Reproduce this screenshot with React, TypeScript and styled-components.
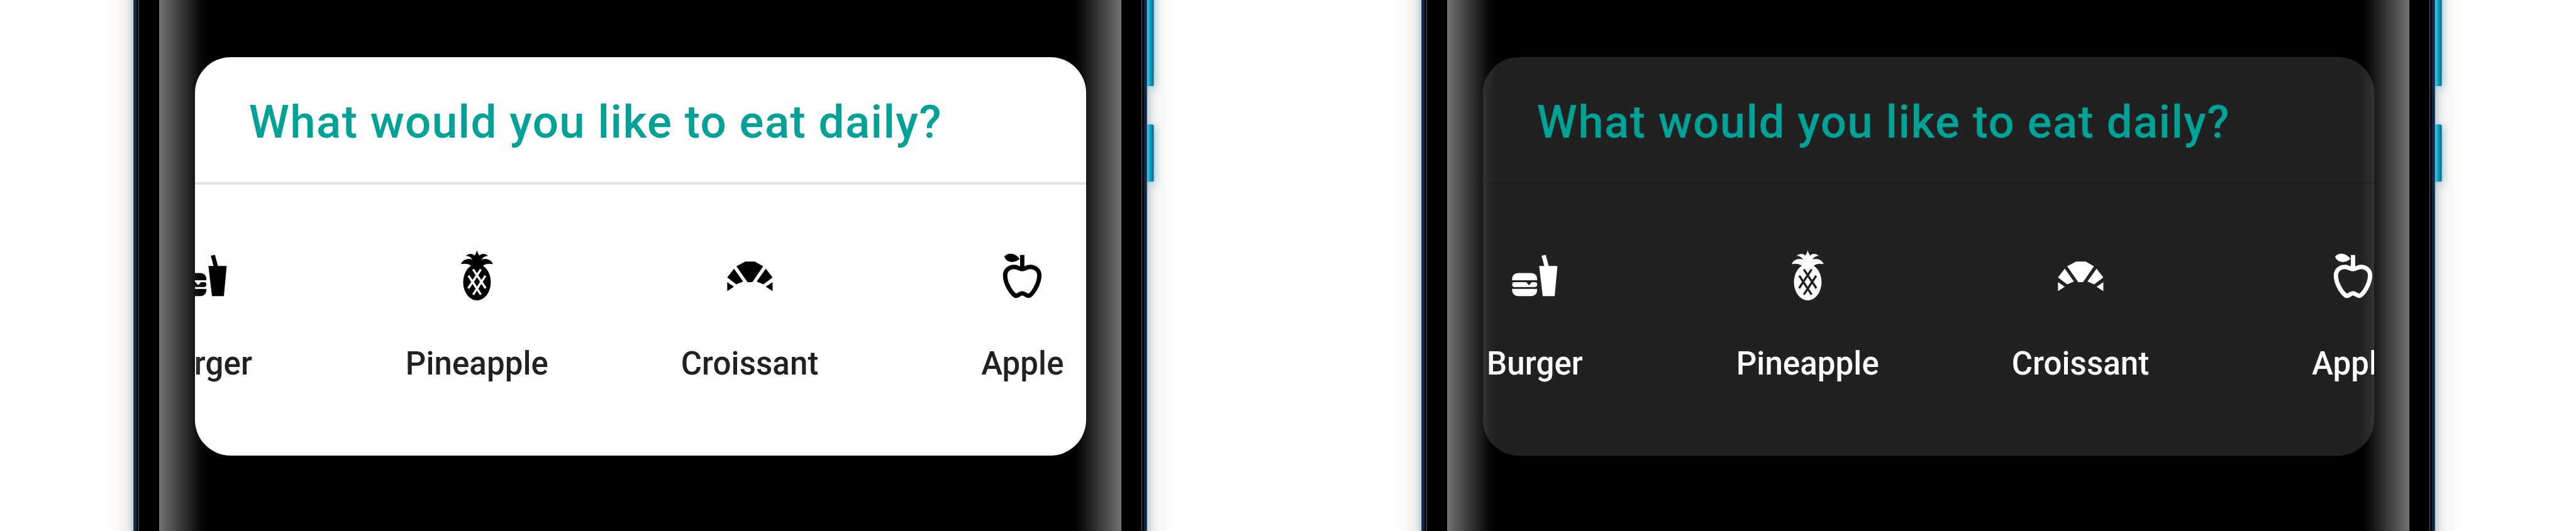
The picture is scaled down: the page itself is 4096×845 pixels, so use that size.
import React from "react";
import styled, { createGlobalStyle, ThemeProvider } from "styled-components";

const SCALE = 4096 / 4320;
const u = (n: number) => `${+(n * SCALE).toFixed(3)}px`;

interface Scheme {
  surface: string;
  divider: string;
  label: string;
  icon: string;
  title: string;
}

const light: Scheme = {
  surface: "#ffffff",
  divider: "#e0e0e0",
  label: "#212121",
  icon: "#000000",
  title: "#00a196",
};

const dark: Scheme = {
  surface: "#212121",
  divider: "#1d1d1d",
  label: "#ffffff",
  icon: "#ffffff",
  title: "#00a196",
};

const GlobalStyle = createGlobalStyle`
  html, body { margin: 0; padding: 0; background: #fff; }
  body { overflow: hidden; font-family: Roboto, "Liberation Sans", sans-serif; }
  * { box-sizing: border-box; }
`;

const Page = styled.main`
  display: flex;
  width: 4096px;
  height: 845px;
  overflow: hidden;
  background: #fff;
`;

const Stage = styled.section`
  display: flex;
  flex: 0 0 ${u(2160)};
  height: calc(100% + ${u(200)});
  margin-top: ${u(-100)};
  padding-left: ${u(224)};
`;

const Body = styled.div`
  display: flex;
  flex: 0 0 ${u(1699.7)};
  min-width: 0;
  height: 100%;
  background: #000;
  box-shadow: 0 0 ${u(13)} rgba(0, 100, 130, 0.32), 0 0 ${u(44)} rgba(0, 0, 0, 0.2);
`;

const Rail = styled.div<{ $flip?: boolean }>`
  flex: 0 0 ${u(43)};
  background: linear-gradient(
    ${(p) => (p.$flip ? "270deg" : "90deg")},
    #3c4a52 0 ${u(1.2)},
    #0b2748 ${u(1.6)} ${u(5.4)},
    #000 ${u(6)} ${u(8)},
    #5c5f5f ${u(8)} ${u(9)},
    #000 ${u(9.2)}
  );
`;

const Screen = styled.div`
  position: relative;
  flex: 1 1 0;
  min-width: 0;
  padding: ${u(196)} ${u(59.7)} 0 ${u(59.5)};
  background: #000;
`;

const EdgeGlare = styled.div<{ $side: "left" | "right" }>`
  position: absolute;
  top: 0;
  bottom: 0;
  ${(p) => p.$side}: 0;
  width: ${u(80)};
  pointer-events: none;
  background: linear-gradient(
    to ${(p) => (p.$side === "left" ? "right" : "left")},
    rgba(255, 255, 255, 0.45) 0%,
    rgba(255, 255, 255, 0.33) 25%,
    rgba(255, 255, 255, 0.21) 50%,
    rgba(255, 255, 255, 0.09) 74%,
    rgba(255, 255, 255, 0.03) 87%,
    rgba(255, 255, 255, 0) 100%
  );
`;

const SideKeys = styled.div`
  display: flex;
  flex-direction: column;
  gap: ${u(65)};
`;

const SideKey = styled.div<{ $height: number }>`
  width: ${u(11.3)};
  height: ${(p) => u(p.$height)};
  border-radius: 0 ${u(2.5)} ${u(2.5)} 0;
  background: linear-gradient(90deg, #6cc5e6 0%, #35b0d8 22%, #0a9dc6 48%, #00889c 72%, #00736f 90%, #5a93a8 96%);
  box-shadow: ${u(2)} ${u(3)} ${u(14)} rgba(0, 120, 150, 0.34);
`;

const Card = styled.article`
  height: ${u(668.5)};
  border-radius: ${u(60)};
  overflow: hidden;
  background: ${(p) => (p.theme as Scheme).surface};
`;

const CardHeader = styled.header`
  display: flex;
  align-items: center;
  height: ${u(213.7)};
  padding: ${u(9)} 0 0 ${u(91)};
  border-bottom: 4px solid ${(p) => (p.theme as Scheme).divider};
`;

const Title = styled.h2`
  margin: 0;
  font-size: ${u(76.8)};
  font-weight: 500;
  line-height: ${u(100)};
  letter-spacing: ${u(1.42)};
  white-space: nowrap;
  color: ${(p) => (p.theme as Scheme).title};
`;

const Carousel = styled.div<{ $offset: number }>`
  display: flex;
  width: max-content;
  margin-left: ${(p) => u(p.$offset)};
  padding-top: ${u(100.3)};
`;

const Item = styled.div`
  display: flex;
  flex-direction: column;
  align-items: center;
  width: ${u(457.5)};
`;

const Glyph = styled.svg`
  display: block;
  width: ${u(100)};
  height: ${u(100)};
  fill: ${(p) => (p.theme as Scheme).icon};

  .outline {
    fill: none;
    stroke: ${(p) => (p.theme as Scheme).icon};
  }
  .cutout {
    fill: none;
    stroke: ${(p) => (p.theme as Scheme).surface};
  }
`;

const Label = styled.span`
  margin-top: ${u(70.4)};
  font-size: ${u(53.76)};
  font-weight: 500;
  line-height: ${u(62)};
  letter-spacing: ${u(0.1)};
  white-space: nowrap;
  color: ${(p) => (p.theme as Scheme).label};
`;

const BurgerIcon = () => (
  <Glyph viewBox="12 0 300 300">
    <path d="M48 180v-4c0-20 12-32 32-32h62c20 0 32 12 32 32v4z" />
    <path d="M58 190h61l14 16 14-16h17q10 0 10 12t-10 12H58q-10 0-10-12t10-12z" />
    <path d="M48 224h126v4c0 20-12 32-32 32H80c-20 0-32-12-32-32z" />
    <path d="M184 108h26L196 57l21-5 15 56h44l-14 152h-60z" />
  </Glyph>
);

const PineappleIcon = () => (
  <Glyph viewBox="4.5 0 300 300">
    <ellipse cx="154.5" cy="190" rx="69.5" ry="91.5" />
    <path d="M154.500 29C158 43 163 50 167 56C177 44 198 45 210 58C193 59 185 66 178 76C200 68 226 76 235 99C215 95 196 98 182 108H127C113 98 94 95 74 99C83 76 109 68 131 76C124 66 116 59 99 58C111 45 132 44 142 56C146 50 151 43 154.500 29z" />
    <path
      className="cutout"
      strokeWidth="11"
      strokeLinecap="square"
      strokeLinejoin="round"
      d="M138 130L195 216M171 130L114 216M115 162L171 248M194 162L138 248"
    />
  </Glyph>
);

const CroissantIcon = () => (
  <Glyph viewBox="27 0 300 300">
    <path d="M154 86h48l42 24-55 80h-24l-56-80z" />
    <path d="M97 122l46 65-34 14-46-35z" />
    <path d="M257 122l-46 65 34 14 46-35z" />
    <path d="M63 190l34 23-34 22z" />
    <path d="M291 190l-34 23 34 22z" />
  </Glyph>
);

const AppleIcon = () => (
  <Glyph viewBox="109 90 300 300">
    <path d="M248 143h22v76h-22z" />
    <path d="M169 152C182 130 224 130 246 163C222 186 180 184 169 152z" />
    <path
      className="outline"
      strokeWidth="22"
      strokeLinejoin="round"
      d="M259 214C244 214 237 203 219 203C192 203 173 221 173 246C173 286 203 336 226 349C240 349 246 336 259 336C272 336 278 349 293 349C315 336 345 286 345 246C345 221 326 203 299 203C281 203 274 214 259 214z"
    />
  </Glyph>
);

const foods = [
  { name: "Burger", Icon: BurgerIcon },
  { name: "Pineapple", Icon: PineappleIcon },
  { name: "Croissant", Icon: CroissantIcon },
  { name: "Apple", Icon: AppleIcon },
];

const Phone = ({ scheme, offset }: { scheme: Scheme; offset: number }) => (
  <ThemeProvider theme={scheme}>
    <Stage>
      <Body>
        <Rail />
        <Screen>
          <Card>
            <CardHeader>
              <Title>What would you like to eat daily?</Title>
            </CardHeader>
            <Carousel $offset={offset}>
              {foods.map(({ name, Icon }) => (
                <Item key={name}>
                  <Icon />
                  <Label>{name}</Label>
                </Item>
              ))}
            </Carousel>
          </Card>
          <EdgeGlare $side="left" />
          <EdgeGlare $side="right" />
        </Screen>
        <Rail $flip />
      </Body>
      <SideKeys>
        <SideKey $height={244} />
        <SideKey $height={96} />
      </SideKeys>
    </Stage>
  </ThemeProvider>
);

export default function App() {
  return (
    <>
      <GlobalStyle />
      <Page>
        <Phone scheme={light} offset={-212.9} />
        <Phone scheme={dark} offset={-141.3} />
      </Page>
    </>
  );
}
